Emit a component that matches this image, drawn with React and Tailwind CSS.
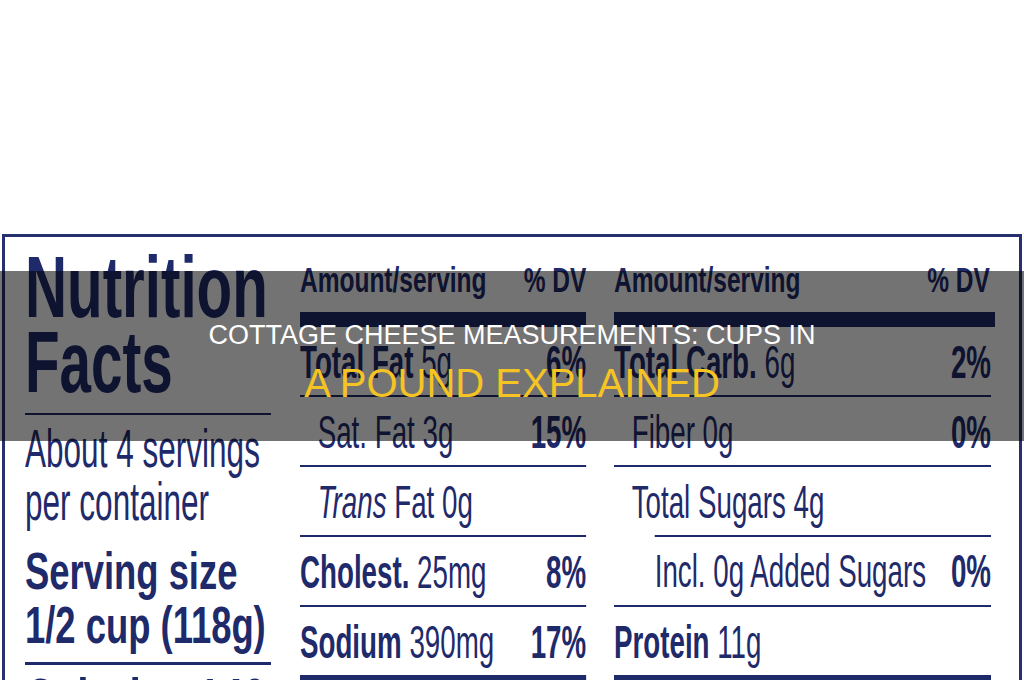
function Row({ children, pct, indent, last }) {
  return (
    <div
      className={`flex items-center justify-between border-[#1f2a6b] ${
        last ? 'h-[76px] border-b-[8px]' : 'h-[70px] border-b-2'
      }`}
    >
      <span className={`whitespace-nowrap ${indent ? 'pl-[30px]' : ''}`}>{children}</span>
      {pct && <span className="font-bold">{pct}</span>}
    </div>
  );
}

function Header({ wide }) {
  return (
    <>
      <div className="flex h-[75px] items-end pb-[15px]">
        <div
          className={`flex shrink-0 origin-left scale-x-[0.7] items-center justify-between text-[35px] leading-none font-bold ${
            wide ? 'w-[544px] pr-[7px]' : 'w-[409px]'
          }`}
        >
          <span className="whitespace-nowrap">Amount/serving</span>
          <span className="whitespace-nowrap">% DV</span>
        </div>
      </div>
      <div className="h-[15px] bg-[#1f2a6b]" />
    </>
  );
}

export default function App() {
  return (
    <div
      className="relative h-[680px] w-[1024px] overflow-hidden bg-white text-[#1f2a6b]"
      style={{ fontFamily: '"Liberation Sans", Arial, sans-serif' }}
    >
      {/* Nutrition label */}
      <div className="mt-[234px] ml-[2px] w-[1020px] border-[3px] border-b-0 border-[#26306f] pl-[20px]">
        <div className="flex">
          {/* Left column */}
          <div className="w-[246px] shrink-0 pt-[12px]">
            <div className="origin-left scale-x-[0.67] text-[87px] leading-[75px] font-bold whitespace-nowrap">Nutrition</div>
            <div className="origin-left scale-x-[0.65] text-[87px] leading-[75px] font-bold whitespace-nowrap">Facts</div>
            <div className="mt-[14px] h-[2px] bg-[#1f2a6b]" />
            <div className="mt-[7px] origin-left scale-x-[0.595] text-[53px] leading-[53px] whitespace-nowrap">
              <div>About 4 servings</div>
              <div>per container</div>
            </div>
            <div className="mt-[16px] origin-left scale-x-[0.7] text-[52px] leading-[54px] font-bold whitespace-nowrap">
              <div>Serving size</div>
              <div>1/2 cup (118g)</div>
            </div>
            <div className="mt-[10px] h-[3px] bg-[#1f2a6b]" />
            <div className="mt-[4px] origin-left scale-x-[0.66] text-[62px] leading-none font-bold whitespace-nowrap">
              Calories 140
            </div>
          </div>

          {/* Middle column */}
          <div className="ml-[29px] w-[286px] shrink-0">
            <Header />
            <div className="w-[485px] origin-left scale-x-[0.59] text-[47px] leading-none">
              <Row pct="6%"><span className="font-bold">Total Fat</span> 5g</Row>
              <Row pct="15%" indent>Sat. Fat 3g</Row>
              <Row indent><span className="italic">Trans</span> Fat 0g</Row>
              <Row pct="8%"><span className="font-bold">Cholest.</span> 25mg</Row>
              <Row pct="17%" last><span className="font-bold">Sodium</span> 390mg</Row>
            </div>
          </div>

          {/* Right column */}
          <div className="ml-[28px] w-[381px] shrink-0">
            <Header wide />
            <div className="w-[646px] origin-left scale-x-[0.59] pr-[7px] text-[47px] leading-none">
              <Row pct="2%"><span className="font-bold">Total Carb.</span> 6g</Row>
              <Row pct="0%" indent>Fiber 0g</Row>
              <div className="flex h-[68px] items-center">
                <span className="pl-[30px] whitespace-nowrap">Total Sugars 4g</span>
              </div>
              <div className="border-b-2 border-[#1f2a6b]">
                <div className="ml-[69px] flex h-[70px] items-center justify-between border-t-2 border-[#1f2a6b] pb-[2px]">
                  <span className="whitespace-nowrap">Incl. 0g Added Sugars</span>
                  <span className="font-bold">0%</span>
                </div>
              </div>
              <Row last><span className="font-bold">Protein</span> 11g</Row>
            </div>
          </div>
        </div>
      </div>

      {/* Title overlay */}
      <div className="absolute top-[271px] right-0 left-0 flex h-[170px] flex-col items-center gap-[8px] bg-black/55 pt-[48px]">
        <div className="text-[27px] leading-[32px] text-white">COTTAGE CHEESE MEASUREMENTS: CUPS IN</div>
        <div className="text-[40px] leading-[48px] text-[#f5c423]">A POUND EXPLAINED</div>
      </div>
    </div>
  );
}
